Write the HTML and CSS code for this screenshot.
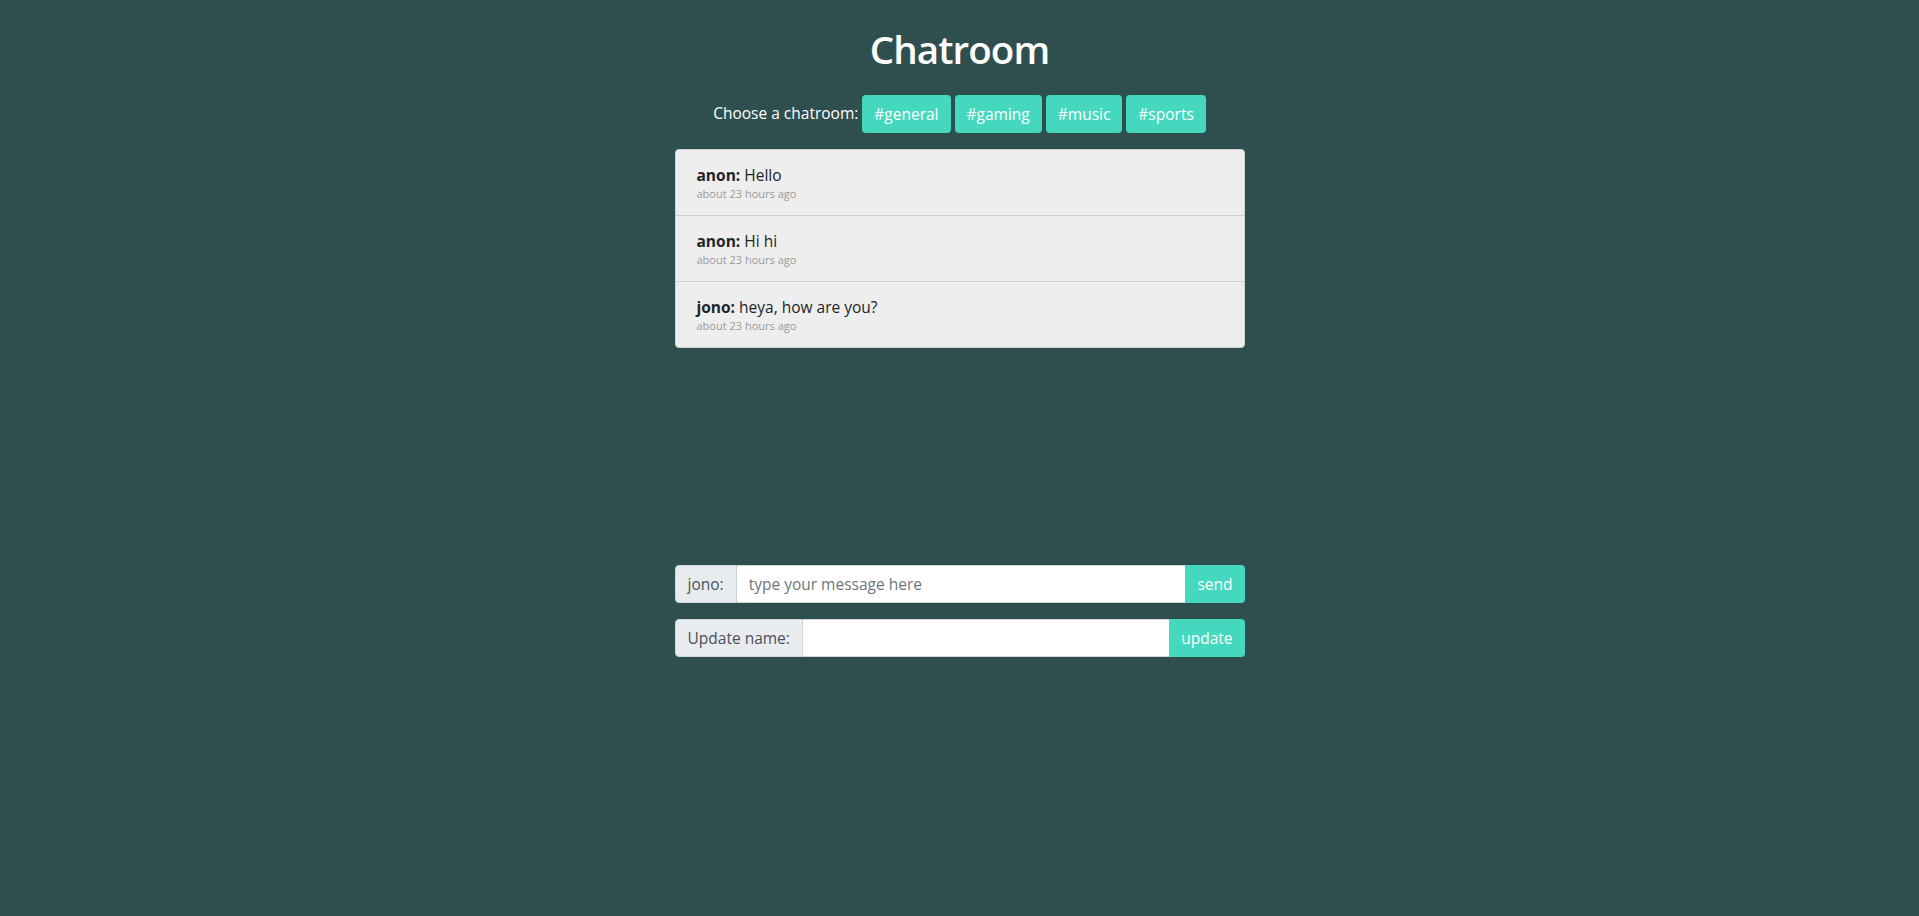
FILE: index.html
```html
<!DOCTYPE html>
<html lang="en">
<head>
<meta charset="utf-8">
<title>Chatroom</title>
<link rel="stylesheet" href="styles.css">
</head>
<body>
<div class="app">
  <h1 class="title">Chatroom</h1>
  <div class="rooms">
    <span class="rooms-label">Choose a chatroom:</span>
    <button class="btn">#general</button>
    <button class="btn">#gaming</button>
    <button class="btn">#music</button>
    <button class="btn">#sports</button>
  </div>
  <div class="messages">
    <ul class="message-list">
      <li class="message">
        <div class="message-text"><strong>anon:</strong> Hello</div>
        <div class="message-time">about 23 hours ago</div>
      </li>
      <li class="message">
        <div class="message-text"><strong>anon:</strong> Hi hi</div>
        <div class="message-time">about 23 hours ago</div>
      </li>
      <li class="message">
        <div class="message-text"><strong>jono:</strong> heya, how are you?</div>
        <div class="message-time">about 23 hours ago</div>
      </li>
    </ul>
  </div>
  <form class="input-group">
    <span class="input-label">jono:</span>
    <input class="input-field" type="text" placeholder="type your message here">
    <button class="btn btn-append" type="button">send</button>
  </form>
  <form class="input-group">
    <span class="input-label">Update name:</span>
    <input class="input-field" type="text">
    <button class="btn btn-append" type="button">update</button>
  </form>
</div>
</body>
</html>
```

FILE: styles.css
```css
* { box-sizing: border-box; }

html, body {
  margin: 0;
  padding: 0;
  background: #2f4f4f;
  font-family: "Open Sans", "Noto Sans", "Liberation Sans", sans-serif;
  font-size: 15.5px;
  color: #212529;
}

.app {
  width: 570px;
  margin: 0 auto;
  padding-top: 25px;
}

.title {
  margin: 0 0 22px;
  text-align: center;
  color: #fff;
  font-size: 38.5px;
  line-height: 48px;
  font-weight: 600;
  letter-spacing: -0.9px;
}

.rooms {
  display: flex;
  justify-content: center;
  align-items: center;
  gap: 4px;
  margin: 0 -60px 16px;
}

.rooms-label {
  color: #fff;
  line-height: 24px;
  padding-bottom: 3px;
}

.btn {
  font-family: inherit;
  font-size: 15.5px;
  line-height: 24px;
  padding: 7px 12px;
  border: 0;
  border-radius: 4px;
  background: #44d9bf;
  color: #fff;
  cursor: pointer;
}

.messages {
  height: 400px;
  margin-bottom: 16px;
}

.message-list {
  list-style: none;
  margin: 0;
  padding: 0;
  background: #eee;
  border: 1px solid #d2d2d2;
  border-radius: 4px;
}

.message {
  padding: 13px 19px 14px 21px;
  border-top: 1px solid #cfcfcf;
}

.message:first-child {
  border-top: 0;
}

.message-text {
  line-height: 24px;
}

.message-text strong {
  font-weight: 700;
}

.message-time {
  font-size: 11px;
  line-height: 14px;
  color: #9a9a9a;
}

.input-group {
  display: flex;
  height: 38px;
  margin: 0 0 16px;
}

.input-label {
  display: flex;
  align-items: center;
  padding: 0 12px;
  background: #e9ecef;
  color: #495057;
  border: 1px solid #ced4da;
  border-radius: 4px 0 0 4px;
  white-space: nowrap;
}

.input-field {
  flex: 1;
  min-width: 0;
  font-family: inherit;
  font-size: 15.5px;
  padding: 0 12px;
  color: #495057;
  background: #fff;
  border: 1px solid #ced4da;
  border-left: 0;
  border-right: 0;
  outline: none;
}

.input-field::placeholder {
  color: #6c757d;
}

.btn-append {
  border-radius: 0 4px 4px 0;
  padding: 7px 12px;
}
```
